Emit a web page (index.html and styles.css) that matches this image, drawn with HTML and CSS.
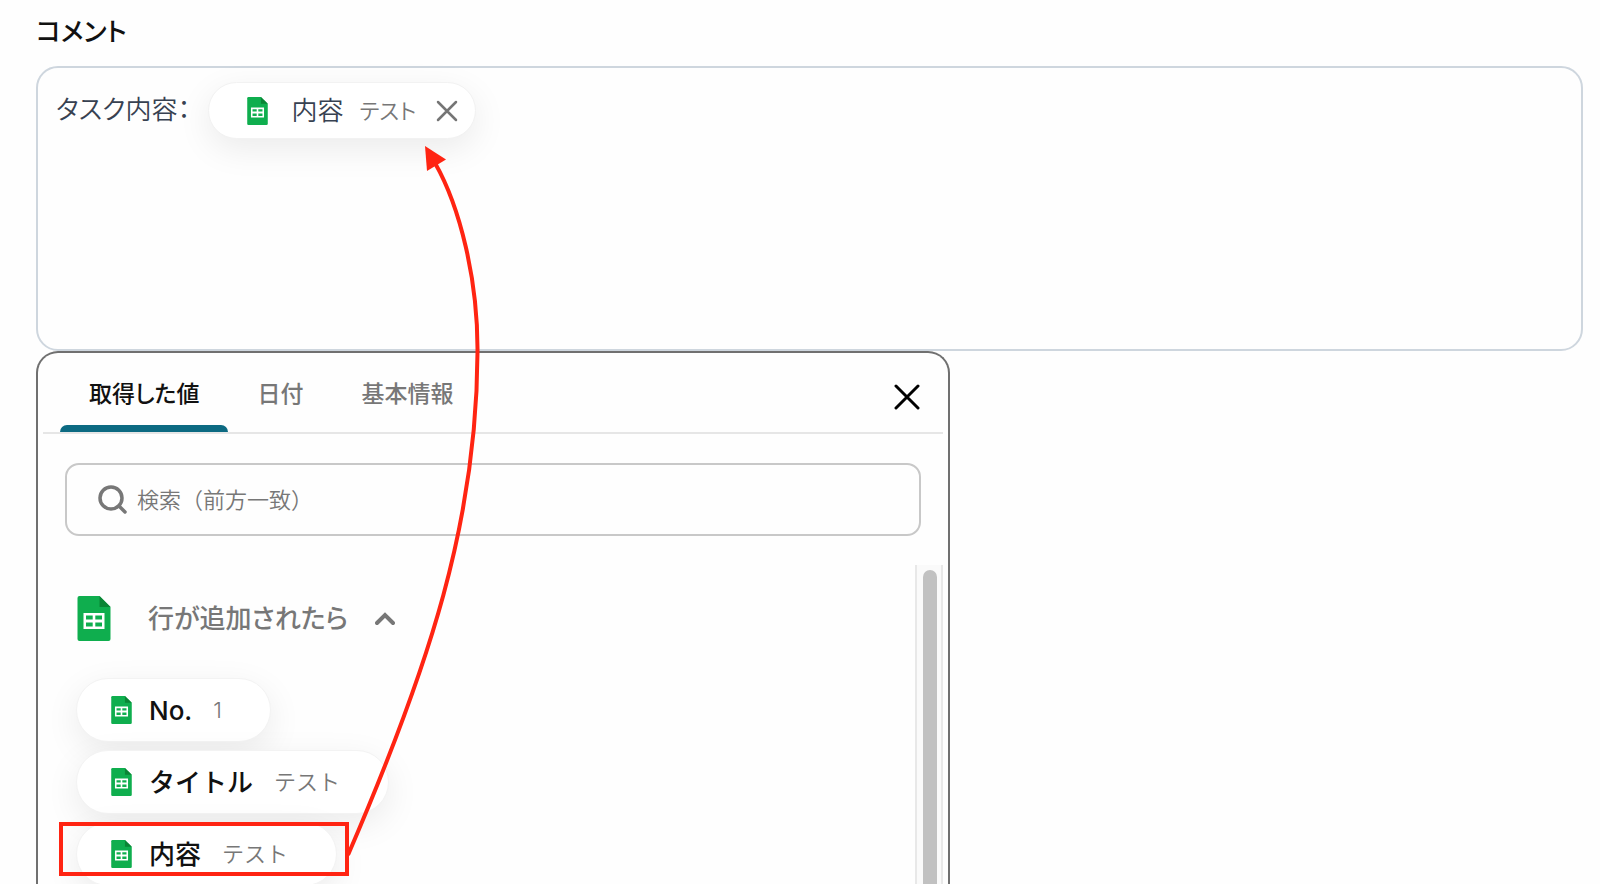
FILE: index.html
```html
<!DOCTYPE html>
<html lang="ja">
<head>
<meta charset="utf-8">
<meta name="viewport" content="width=device-width, initial-scale=1">
<title>コメント</title>
<link rel="stylesheet" href="styles.css">
</head>
<body>
<svg class="defs" aria-hidden="true">
  <symbol id="sheet" viewBox="0 0 33 45">
    <path fill="#0fae4e" d="M2 0H22L33 11V43a2 2 0 0 1-2 2H2a2 2 0 0 1-2-2V2a2 2 0 0 1 2-2z"/>
    <path fill="#0a8535" d="M22 0L33 11H22z"/>
    <path fill="#fff" fill-rule="evenodd" d="M6 17H27V33H6zM8.500 19.500V23.500H15.200V19.500zM17.800 19.500V23.500H24.500V19.500zM8.500 26.500V30.500H15.200V26.500zM17.800 26.500V30.500H24.500V26.500z"/>
  </symbol>
</svg>
<main class="page">
  <h1 class="title" id="comment-label">コメント</h1>
  <section class="editor" aria-labelledby="comment-label">
    <span class="editor-text">タスク内容：</span>
    <span class="chip">
      <svg class="sheet-small" aria-hidden="true"><use href="#sheet"/></svg>
      <span class="chip-name">内容</span>
      <span class="chip-value">テスト</span>
      <button class="chip-remove" type="button" aria-label="削除">
        <svg viewBox="0 0 22 22" aria-hidden="true"><path d="M2 2L20 20M20 2L2 20"/></svg>
      </button>
    </span>
  </section>

  <section class="picker">
    <div class="tabs" role="tablist">
      <button class="tab tab-active" type="button" role="tab" aria-selected="true">取得した値</button>
      <button class="tab" type="button" role="tab" aria-selected="false">日付</button>
      <button class="tab" type="button" role="tab" aria-selected="false">基本情報</button>
      <button class="close" type="button" aria-label="閉じる">
        <svg viewBox="0 0 26 26" aria-hidden="true"><path d="M2 2L24 24M24 2L2 24"/></svg>
      </button>
    </div>
    <label class="search">
      <svg class="search-icon" viewBox="0 0 30 30" aria-hidden="true"><circle cx="13" cy="13" r="11"/><path d="M21 21L27 27"/></svg>
      <input class="search-input" type="text" placeholder="検索（前方一致）" aria-label="検索（前方一致）">
    </label>
    <div class="results">
      <div class="list">
        <button class="group" type="button" aria-expanded="true">
          <svg class="sheet-large" aria-hidden="true"><use href="#sheet"/></svg>
          <span class="group-name">行が追加されたら</span>
          <svg class="chevron" viewBox="0 0 20 16" aria-hidden="true"><path d="M2 13L10 5L18 13"/></svg>
        </button>
        <button class="pill" type="button"><svg class="sheet-small" aria-hidden="true"><use href="#sheet"/></svg><span class="pill-name latin">No.</span><span class="pill-value latin">1</span></button>
        <button class="pill" type="button"><svg class="sheet-small" aria-hidden="true"><use href="#sheet"/></svg><span class="pill-name">タイトル</span><span class="pill-value">テスト</span></button>
        <button class="pill" type="button"><svg class="sheet-small" aria-hidden="true"><use href="#sheet"/></svg><span class="pill-name">内容</span><span class="pill-value">テスト</span></button>
      </div>
      <div class="track"><div class="thumb"></div></div>
    </div>
  </section>

  <svg class="annotation" width="500" height="884" viewBox="0 0 500 884" aria-hidden="true">
    <rect x="61" y="824" width="286" height="50"/>
    <path d="M348 855C430 665 477 520 477.500 352C478 280 460 207 435 163"/>
    <path class="arrowhead" d="M425 146L446 159.500L427 171z"/>
  </svg>
</main>
</body>
</html>
```
FILE: styles.css
```css
* {
  box-sizing: border-box;
}

body {
  margin: 0;
  background: #fefefe;
  font-family: "Noto Sans CJK JP", sans-serif;
  color: #111;
}

button {
  margin: 0;
  padding: 0;
  border: 0;
  background: none;
  font: inherit;
  color: inherit;
}

svg {
  display: block;
  flex: none;
}

.defs {
  position: absolute;
  width: 0;
  height: 0;
}

.page {
  position: relative;
  display: flex;
  flex-direction: column;
  height: 100vh;
  padding: 12px 17px 0 36px;
  overflow: hidden;
}

.title {
  margin: 0 0 18px;
  font-size: 26px;
  line-height: 36px;
  font-weight: 500;
  font-feature-settings: "palt";
}

.editor {
  display: flex;
  flex: none;
  align-items: flex-start;
  gap: 18px;
  min-height: 285px;
  padding: 14px 18px;
  border: 2px solid #ced6de;
  border-radius: 22px;
  font-size: 26px;
  color: #374151;
  font-weight: 350;
  font-feature-settings: "palt";
}

.editor-text {
  line-height: 52px;
}

.chip {
  display: flex;
  align-items: center;
  height: 57px;
  padding: 0 17px 0 38px;
  border: 1px solid #f2f2f2;
  border-radius: 29px;
  background: #fff;
  box-shadow: 0 10px 34px rgba(0, 0, 0, 0.08);
}

.sheet-small {
  width: 21px;
  height: 28px;
}

.chip-name,
.chip-value,
.group-name,
.pill-name,
.pill-value {
  padding-bottom: 4px;
}

.chip-name {
  margin-left: 23px;
}

.chip-value {
  margin-left: 16px;
  font-size: 22px;
  color: #777;
}

.chip-remove {
  margin-left: 20px;
}

.chip-remove svg {
  width: 22px;
  height: 22px;
  fill: none;
  stroke: #757575;
  stroke-width: 2.500;
  stroke-linecap: round;
}

.picker {
  display: flex;
  flex: 1;
  flex-direction: column;
  width: 59.100%;
  min-height: 0;
  padding: 0 5px;
  border: 2px solid #707070;
  border-bottom: 0;
  border-radius: 22px 22px 0 0;
  background: #fefefe;
}

.tabs {
  display: flex;
  flex: none;
  height: 81px;
  padding: 0 23px 0 17px;
  border-bottom: 2px solid #e6e6e6;
  font-size: 23px;
  font-weight: 500;
  font-feature-settings: "palt";
  color: #777;
}

.tab {
  position: relative;
  padding: 0 29px 2px;
}

.tab-active {
  color: #111;
}

.tab-active::after {
  content: "";
  position: absolute;
  right: 0;
  bottom: 0;
  left: 0;
  height: 7px;
  border-radius: 7px 7px 0 0;
  background: #0c6a82;
}

.close {
  margin-left: auto;
  padding-top: 8px;
}

.close svg {
  width: 26px;
  height: 26px;
  fill: none;
  stroke: #000;
  stroke-width: 3;
  stroke-linecap: round;
}

.search {
  display: flex;
  flex: none;
  align-items: center;
  gap: 9px;
  height: 73px;
  margin: 29px 22px;
  padding: 0 31px;
  border: 2px solid #c8c8c8;
  border-radius: 14px;
}

.search-icon {
  width: 30px;
  height: 30px;
  fill: none;
  stroke: #777;
  stroke-width: 3.500;
  stroke-linecap: round;
}

.search-input {
  flex: 1;
  min-width: 0;
  padding: 0 0 4px;
  border: 0;
  outline: 0;
  background: none;
  font: inherit;
  font-size: 22px;
  font-weight: 350;
}

.search-input::placeholder {
  color: #777;
  opacity: 1;
}

.results {
  display: flex;
  flex: 1;
  min-height: 0;
}

.list {
  display: flex;
  flex: 1;
  flex-direction: column;
  align-items: flex-start;
  gap: 8px;
  padding: 26px 33px 0;
}

.group {
  display: flex;
  flex: none;
  align-items: center;
  height: 54px;
  margin: 0 0 25px 1px;
  font-size: 26px;
  font-weight: 500;
  font-feature-settings: "palt";
  color: #777;
}

.sheet-large {
  width: 34px;
  height: 45px;
  margin-right: 37px;
}

.chevron {
  width: 20px;
  height: 16px;
  margin-left: 27px;
  fill: none;
  stroke: #777;
  stroke-width: 4;
  stroke-linecap: round;
}

.pill {
  display: flex;
  flex: none;
  align-items: center;
  height: 64px;
  padding: 0 48px 0 34px;
  border: 1px solid #f3f3f3;
  border-radius: 32px;
  background: #fff;
  box-shadow: 0 10px 34px rgba(0, 0, 0, 0.08);
}

.pill-name {
  margin-left: 17px;
  font-size: 26px;
  font-weight: 500;
}

.pill-value {
  margin-left: 21px;
  font-size: 22px;
  font-weight: 350;
  color: #777;
}

.latin {
  padding-bottom: 0;
  font-family: Inter, sans-serif;
}

.track {
  flex: none;
  width: 28px;
  padding: 5px 4px 0 6px;
  border: solid #e8e8e8;
  border-width: 0 2px;
  background: #fafafa;
}

.thumb {
  width: 14px;
  height: 100%;
  border-radius: 7px 7px 0 0;
  background: #c1c1c1;
}

.annotation {
  position: absolute;
  top: 0;
  left: 0;
  fill: none;
  stroke: #ff2412;
  stroke-width: 4;
}

.arrowhead {
  fill: #ff2412;
  stroke: none;
}
```
